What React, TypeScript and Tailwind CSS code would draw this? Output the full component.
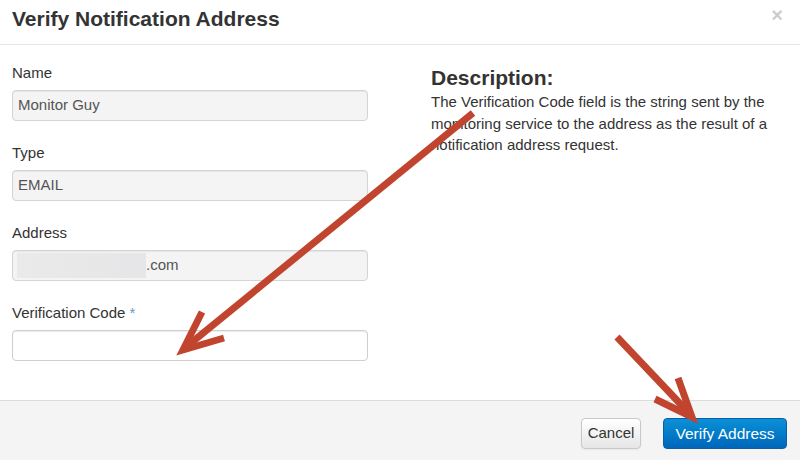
import React from "react";

const fields = [
  { label: "Name", value: "Monitor Guy" },
  { label: "Type", value: "EMAIL" },
];

const ReadonlyInput: React.FC<{ children: React.ReactNode }> = ({ children }) => (
  <div className="h-[31px] w-[356px] rounded-[4px] border border-[#d4d4d4] bg-[#f4f4f4] px-[5px] flex items-center text-[15px] text-[#555] shadow-[inset_0_1px_1px_rgba(0,0,0,0.06)]">
    {children}
  </div>
);

const Arrows: React.FC = () => (
  <svg
    className="absolute inset-0 pointer-events-none"
    width="800"
    height="460"
    viewBox="0 0 800 460"
  >
    <g stroke="#c1452e" strokeWidth="7" fill="none" strokeLinecap="butt" strokeLinejoin="miter">
      {/* arrow to verification code input */}
      <line x1="473" y1="113" x2="186" y2="347" />
      <polyline points="202,312 183,350 224,338" />
      {/* arrow to verify button */}
      <line x1="617" y1="337" x2="689" y2="413" />
      <polyline points="678,378 692,417 655,399" />
    </g>
  </svg>
);

export default function App() {
  return (
    <div className="relative w-[800px] h-[460px] bg-white overflow-hidden font-['Liberation_Sans',Arial,sans-serif] text-[#333]">
      {/* Header */}
      <div className="h-[45px] border-b border-[#e5e5e5] flex items-center justify-between pl-[12px] pr-[17px]">
        <h3 className="text-[21px] font-bold text-[#333] leading-none -mt-[8px]">
          Verify Notification Address
        </h3>
        <span className="text-[20px] font-bold text-black opacity-20 leading-none -mt-[14px]">×</span>
      </div>

      {/* Body */}
      <div className="flex h-[355px] pt-[18px] pl-[12px]">
        <div className="w-[356px] flex flex-col">
          {fields.map((f) => (
            <div key={f.label} className="h-[80px]">
              <div className="text-[15px] leading-[20px] mb-[7px] text-[#333]">{f.label}</div>
              <ReadonlyInput>{f.value}</ReadonlyInput>
            </div>
          ))}
          <div className="h-[80px]">
            <div className="text-[15px] leading-[20px] mb-[7px]">Address</div>
            <ReadonlyInput>
              <div className="w-[129px] h-[25px] bg-gradient-to-r from-[#eaeaea] to-[#e6e6e8] -ml-[1px]" />
              <span>.com</span>
            </ReadonlyInput>
          </div>
          <div>
            <div className="text-[15px] leading-[20px] mb-[7px]">
              Verification Code <span className="text-[#6a9cc4]">*</span>
            </div>
            <div className="h-[31px] w-[356px] rounded-[4px] border border-[#cfcfcf] bg-white shadow-[inset_0_1px_1px_rgba(0,0,0,0.08)]" />
          </div>
        </div>

        <div className="ml-[63px] pt-[3px] w-[360px]">
          <h4 className="text-[21px] font-bold leading-[24px] text-[#333]">Description:</h4>
          <p className="text-[15px] leading-[21.5px] text-[#333] mt-[1px]">
            The Verification Code field is the string sent by the monitoring service to the address as the
            result of a notification address request.
          </p>
        </div>
      </div>

      {/* Footer */}
      <div className="h-[60px] border-t border-[#dcdcdc] bg-[#f4f4f4] flex items-start justify-end gap-[22px] pt-[17px] pr-[13px]">
        <button className="h-[31px] w-[60px] rounded-[4px] border border-[#c8c8c8] bg-gradient-to-b from-white to-[#e6e6e6] text-[15px] text-[#333] shadow-[0_1px_2px_rgba(0,0,0,0.05)]">
          Cancel
        </button>
        <button className="h-[31px] w-[124px] rounded-[4px] border border-[#0a5ea8] bg-gradient-to-b from-[#0b91d8] to-[#0067b9] text-[15.5px] text-white">
          Verify Address
        </button>
      </div>

      <Arrows />
    </div>
  );
}
